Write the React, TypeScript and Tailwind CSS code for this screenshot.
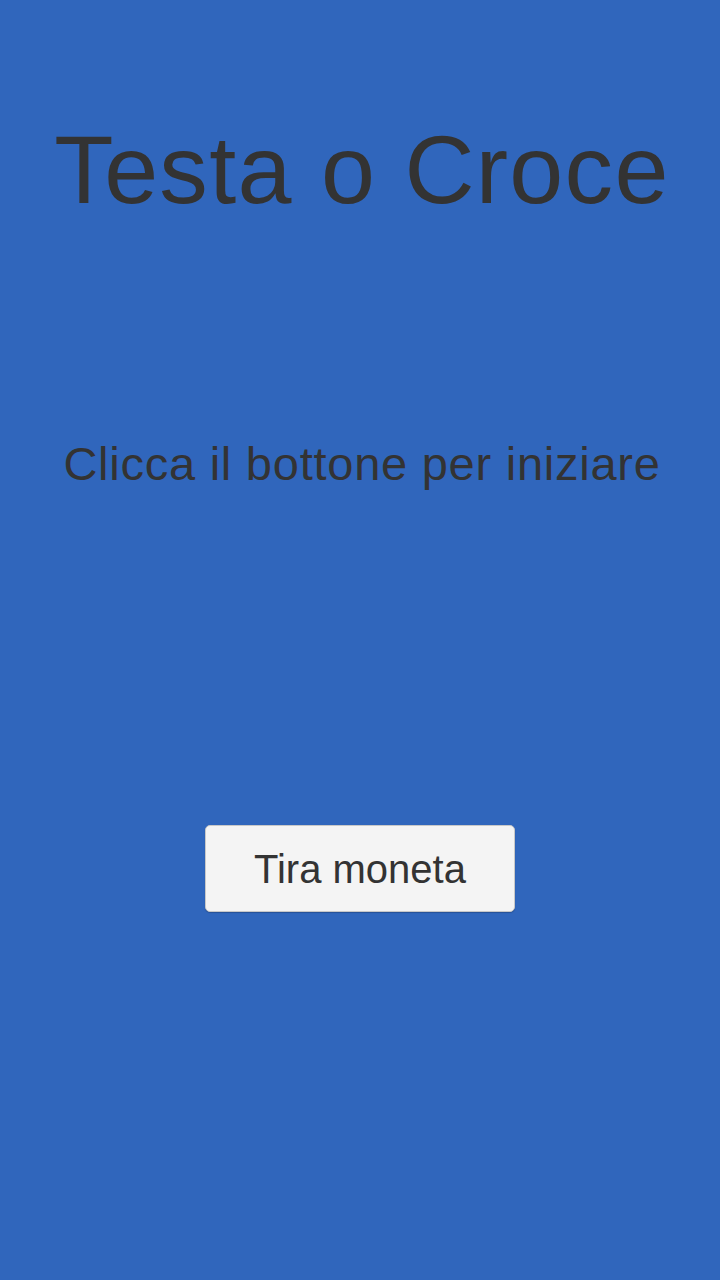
export default function App() {
  return (
    <div className="min-h-[1280px] w-full bg-[#3066bc] flex flex-col items-center text-[#333333] font-['Liberation_Sans',Arial,sans-serif]">
      {/* Title */}
      <h1 className="mt-[110px] pl-[4px] text-[97px] leading-[120px] tracking-[1.3px]">Testa o Croce</h1>

      {/* Status message */}
      <p className="mt-[204px] pl-[4px] text-[47px] leading-[60px] tracking-[0.75px]">Clicca il bottone per iniziare</p>

      {/* Flip button */}
      <button className="mt-[331px] w-[310px] h-[87px] rounded-[5px] bg-[#f4f4f4] border border-[#c8c8c8] shadow-[0_1px_1px_rgba(0,0,0,0.2)] text-[40px] text-[#333333]">
        Tira moneta
      </button>
    </div>
  );
}
